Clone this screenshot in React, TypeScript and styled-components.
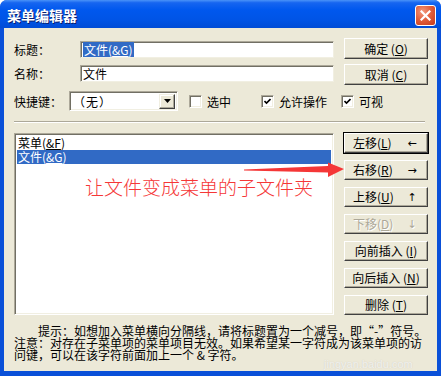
import styled, { createGlobalStyle } from "styled-components";

const GlobalStyle = createGlobalStyle`
  html, body {
    margin: 0;
    padding: 0;
    background: #ffffff;
  }
  body {
    font-family: "Noto Sans CJK SC", "Liberation Sans", sans-serif;
    font-size: 12px;
    color: #000000;
  }
`;

const Window = styled.div`
  position: relative;
  width: 441px;
  height: 376px;
  display: flex;
  flex-direction: column;
  background: #0a50d8;
  border-radius: 7px 7px 0 0;
  overflow: hidden;
`;

const TitleBar = styled.div`
  height: 28px;
  flex: none;
  display: flex;
  align-items: center;
  justify-content: space-between;
  padding: 0 5px 0 7px;
  background: linear-gradient(
    to bottom,
    #4a93f8 0%,
    #1665f0 10%,
    #0058ee 35%,
    #0054e6 70%,
    #004cd6 100%
  );
`;

const TitleText = styled.span`
  color: #ffffff;
  font-size: 14px;
  font-weight: bold;
  text-shadow: 1px 1px 0 #0a1e6e;
  line-height: 1;
  margin-top: 1px;
`;

const CloseButton = styled.div`
  width: 21px;
  height: 21px;
  box-sizing: border-box;
  border: 1px solid #ffffff;
  border-radius: 3px;
  background: radial-gradient(circle at 35% 30%, #f39a7e 0%, #e2603e 45%, #c4381a 100%);
  display: flex;
  align-items: center;
  justify-content: center;
  margin-top: 2px;
`;

const Client = styled.div`
  flex: 1;
  margin: 0 4px 5px 4px;
  background: #ece9d8;
  padding: 10px 9px 0 10px;
  display: flex;
  flex-direction: column;
`;

const TopBlock = styled.div`
  display: flex;
  gap: 10px;
`;

const FieldColumn = styled.div`
  width: 320px;
  display: flex;
  flex-direction: column;
  gap: 7px;
  padding-top: 3px;
`;

const FieldRow = styled.div`
  display: flex;
  align-items: center;
`;

const Label = styled.span<{ $width: number }>`
  width: ${({ $width }) => $width}px;
  flex: none;
  line-height: 17px;
`;

const TextBox = styled.div`
  flex: 1;
  height: 17px;
  box-sizing: border-box;
  background: #ffffff;
  border-top: 1px solid #aca899;
  border-left: 1px solid #aca899;
  border-right: 1px solid #f1efe2;
  border-bottom: 1px solid #f1efe2;
  box-shadow: inset 1px 1px 0 #716f64;
  padding: 0 2px;
  display: flex;
  align-items: center;
  line-height: 15px;
`;

const Selected = styled.span`
  background: #316ac5;
  color: #ffffff;
  padding: 0 1px;
`;

const ButtonColumn = styled.div<{ $gap: number }>`
  width: 84px;
  flex: none;
  display: flex;
  flex-direction: column;
  gap: ${({ $gap }) => $gap}px;
`;

const Button = styled.div<{ $height: number; $default?: boolean; $disabled?: boolean; $split?: boolean }>`
  height: ${({ $height }) => $height}px;
  box-sizing: border-box;
  background: #ece9d8;
  border-top: 1px solid #ffffff;
  border-left: 1px solid #ffffff;
  border-right: 1px solid #404040;
  border-bottom: 1px solid #404040;
  box-shadow: inset -1px -1px 0 #aca899;
  outline: ${({ $default }) => ($default ? "1px solid #000000" : "none")};
  display: flex;
  align-items: center;
  justify-content: ${({ $split }) => ($split ? "space-between" : "center")};
  padding: ${({ $split }) => ($split ? "0 8px" : "0")};
  color: ${({ $disabled }) => ($disabled ? "#aca899" : "#000000")};
  text-shadow: ${({ $disabled }) => ($disabled ? "1px 1px 0 #ffffff" : "none")};
  line-height: 1;
  white-space: nowrap;
`;

const ArrowGlyph = styled.span`
  width: 14px;
  text-align: center;
  font-family: "DejaVu Sans", sans-serif;
  font-size: 11px;
`;

const OptionRow = styled.div`
  display: flex;
  align-items: center;
  margin-top: 6px;
  height: 20px;
`;

const Combo = styled.div`
  width: 109px;
  height: 20px;
  box-sizing: border-box;
  background: #ffffff;
  border-top: 1px solid #aca899;
  border-left: 1px solid #aca899;
  border-right: 1px solid #ffffff;
  border-bottom: 1px solid #ffffff;
  box-shadow: inset 1px 1px 0 #716f64, inset -1px -1px 0 #f1efe2;
  display: flex;
  align-items: center;
  padding: 2px 2px 2px 3px;
`;

const ComboText = styled.span`
  flex: 1;
  letter-spacing: 1px;
`;

const ComboArrow = styled.div`
  width: 16px;
  height: 15px;
  box-sizing: border-box;
  background: #ece9d8;
  border-top: 1px solid #f1efe2;
  border-left: 1px solid #f1efe2;
  border-right: 1px solid #404040;
  border-bottom: 1px solid #404040;
  box-shadow: inset -1px -1px 0 #aca899, inset 1px 1px 0 #ffffff;
  display: flex;
  align-items: center;
  justify-content: center;
`;

const Check = styled.label<{ $left: number }>`
  display: flex;
  align-items: center;
  gap: 5px;
  margin-left: ${({ $left }) => $left}px;
`;

const CheckBox = styled.span`
  width: 13px;
  height: 13px;
  box-sizing: border-box;
  background: #ffffff;
  border-top: 1px solid #aca899;
  border-left: 1px solid #aca899;
  border-right: 1px solid #ffffff;
  border-bottom: 1px solid #ffffff;
  box-shadow: inset 1px 1px 0 #716f64, inset -1px -1px 0 #f1efe2;
  display: flex;
  align-items: center;
  justify-content: center;
`;

const Separator = styled.div`
  margin-top: 10px;
  height: 0;
  border-top: 1px solid #aca899;
  border-bottom: 1px solid #ffffff;
  width: 411px;
`;

const MainBlock = styled.div`
  display: flex;
  gap: 10px;
  margin-top: 10px;
`;

const ListBox = styled.div`
  width: 320px;
  height: 182px;
  box-sizing: border-box;
  background: #ffffff;
  border-top: 1px solid #aca899;
  border-left: 1px solid #aca899;
  border-right: 1px solid #ffffff;
  border-bottom: 1px solid #ffffff;
  box-shadow: inset 1px 1px 0 #716f64, inset -1px -1px 0 #f1efe2;
  padding: 2px;
`;

const ListItem = styled.div<{ $selected?: boolean }>`
  height: 14px;
  line-height: 14px;
  padding-left: 1px;
  background: ${({ $selected }) => ($selected ? "#316ac5" : "transparent")};
  color: ${({ $selected }) => ($selected ? "#ffffff" : "#000000")};
`;

const Hint = styled.div`
  margin-top: 10px;
  font-size: 12px;
  white-space: nowrap;
`;

const HintLine = styled.div<{ $indent?: number }>`
  height: 12px;
  line-height: 12px;
  padding-left: ${({ $indent }) => $indent ?? 0}px;
`;

const Annotation = styled.div`
  position: absolute;
  left: 85px;
  top: 175px;
  color: #f53737;
  font-size: 19px;
  font-weight: 300;
  line-height: 24px;
  white-space: nowrap;
`;

const AnnotationArrow = styled.svg`
  position: absolute;
  left: 240px;
  top: 158px;
`;

const Watermark = styled.div`
  position: absolute;
  left: 324px;
  top: 358px;
  color: rgba(255, 255, 255, 0.7);
  text-shadow: 0 0 1px rgba(160, 160, 160, 0.45);
  font-family: "Liberation Sans", sans-serif;
  font-size: 11px;
  line-height: 12px;
`;

const Key = ({ k }: { k: string }) => (
  <>
    (<u>{k}</u>)
  </>
);

const moveButtons = [
  { text: "左移", key: "L", arrow: "←", default: true },
  { text: "右移", key: "R", arrow: "→" },
  { text: "上移", key: "U", arrow: "↑" },
  { text: "下移", key: "D", arrow: "↓", disabled: true },
];

const insertButtons = [
  { text: "向前插入", key: "I" },
  { text: "向后插入", key: "N" },
  { text: "删除", key: "T" },
];

const Tick = () => (
  <svg width="7" height="7" viewBox="0 0 7 7">
    <path d="M0.5 3 L2.5 5 L6.5 1" stroke="#000000" strokeWidth="1.6" fill="none" />
  </svg>
);

export default function App() {
  return (
    <>
      <GlobalStyle />
      <Window>
        <TitleBar>
          <TitleText>菜单编辑器</TitleText>
          <CloseButton>
            <svg width="11" height="11" viewBox="0 0 11 11">
              <path d="M1.5 1.5 L9.5 9.5 M9.5 1.5 L1.5 9.5" stroke="#ffffff" strokeWidth="2.2" strokeLinecap="square" />
            </svg>
          </CloseButton>
        </TitleBar>
        <Client>
          <TopBlock>
            <FieldColumn>
              <FieldRow>
                <Label $width={66}>标题：</Label>
                <TextBox>
                  <Selected>
                    文件<Key k="&G" />
                  </Selected>
                </TextBox>
              </FieldRow>
              <FieldRow>
                <Label $width={66}>名称：</Label>
                <TextBox>文件</TextBox>
              </FieldRow>
            </FieldColumn>
            <ButtonColumn $gap={5}>
              <Button $height={21}>
                确定 <Key k="O" />
              </Button>
              <Button $height={21}>
                取消 <Key k="C" />
              </Button>
            </ButtonColumn>
          </TopBlock>

          <OptionRow>
            <Label $width={55}>快捷键：</Label>
            <Combo>
              <ComboText>（无）</ComboText>
              <ComboArrow>
                <svg width="7" height="4" viewBox="0 0 7 4">
                  <path d="M0 0 H7 L3.5 4 Z" fill="#000000" />
                </svg>
              </ComboArrow>
            </Combo>
            <Check $left={11}>
              <CheckBox />
              选中
            </Check>
            <Check $left={30}>
              <CheckBox>
                <Tick />
              </CheckBox>
              允许操作
            </Check>
            <Check $left={14}>
              <CheckBox>
                <Tick />
              </CheckBox>
              可视
            </Check>
          </OptionRow>

          <Separator />

          <MainBlock>
            <ListBox>
              <ListItem>
                菜单<Key k="&F" />
              </ListItem>
              <ListItem $selected>
                文件<Key k="&G" />
              </ListItem>
            </ListBox>
            <ButtonColumn $gap={7}>
              {moveButtons.map((b) => (
                <Button key={b.key} $height={20} $split $default={b.default} $disabled={b.disabled}>
                  <span>
                    {b.text}
                    <Key k={b.key} />
                  </span>
                  <ArrowGlyph>{b.arrow}</ArrowGlyph>
                </Button>
              ))}
              {insertButtons.map((b) => (
                <Button key={b.key} $height={20}>
                  {b.text} <Key k={b.key} />
                </Button>
              ))}
            </ButtonColumn>
          </MainBlock>

          <Hint>
            <HintLine $indent={24}>提示：如想加入菜单横向分隔线，请将标题置为一个减号，即“-”符号。</HintLine>
            <HintLine>注意：对存在子菜单项的菜单项目无效。如果希望某一字符成为该菜单项的访</HintLine>
            <HintLine>问键，可以在该字符前面加上一个 &amp; 字符。</HintLine>
          </Hint>
        </Client>

        <AnnotationArrow width="106" height="22" viewBox="0 0 106 22">
          <polygon points="4,11.4 88,8 88,4.5 104,11 88,19 88,14.5 4,12.4" fill="#f53737" />
        </AnnotationArrow>
        <Annotation>让文件变成菜单的子文件夹</Annotation>
        <Watermark>jingyan.baidu.com</Watermark>
      </Window>
    </>
  );
}
